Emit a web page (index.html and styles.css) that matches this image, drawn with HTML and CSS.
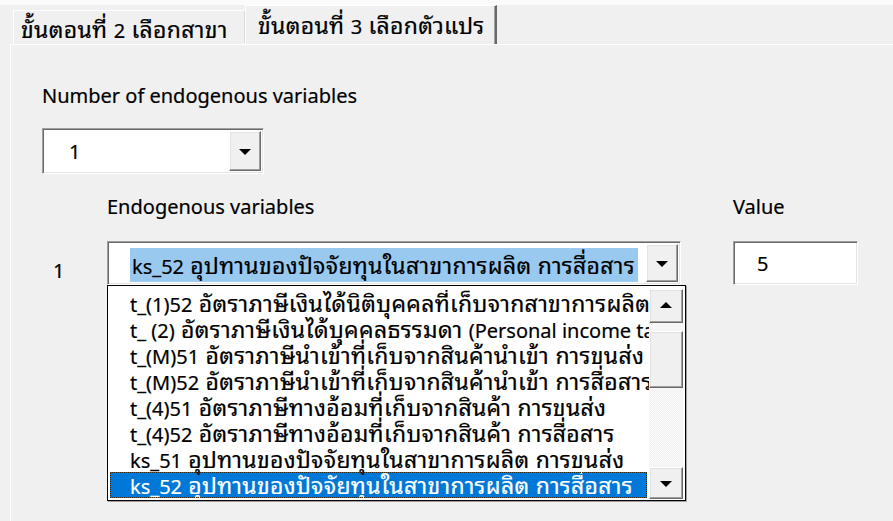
FILE: index.html
```html
<!DOCTYPE html>
<html lang="th">
<head>
<meta charset="utf-8">
<title>ขั้นตอนที่ 3 เลือกตัวแปร</title>
<link rel="stylesheet" href="styles.css">
</head>
<body>
<div class="window">
  <div class="tabs">
    <div class="tab th"><span>ขั้นตอนที่ <span class="code">2</span> เลือกสาขา</span></div>
    <div class="tab active th"><span>ขั้นตอนที่ <span class="code">3</span> เลือกตัวแปร</span></div>
  </div>
  <div class="panel">
    <div class="field-label">Number of endogenous variables</div>
    <div class="combo combo-small">
      <div class="combo-text">1</div>
      <div class="drop-btn"><span class="arrow"></span></div>
    </div>
    <div class="var-grid">
      <div></div>
      <div class="col-head">Endogenous variables</div>
      <div class="col-head">Value</div>
      <div class="row-num">1</div>
      <div class="combo combo-wide">
        <div class="combo-text th"><span class="sel"><span class="code">ks_52</span> อุปทานของปัจจัยทุนในสาขาการผลิต การสื่อสาร</span></div>
        <div class="drop-btn"><span class="arrow"></span></div>
        <div class="dropdown">
          <ul class="items th">
            <li><span class="code">t_(1)52</span> อัตราภาษีเงินได้นิติบุคคลที่เก็บจากสาขาการผลิต</li>
            <li><span class="code">t_ (2)</span> อัตราภาษีเงินได้บุคคลธรรมดา <span class="code">(Personal income tax)</span></li>
            <li><span class="code">t_(M)51</span> อัตราภาษีนำเข้าที่เก็บจากสินค้านำเข้า การขนส่ง</li>
            <li><span class="code">t_(M)52</span> อัตราภาษีนำเข้าที่เก็บจากสินค้านำเข้า การสื่อสาร</li>
            <li><span class="code">t_(4)51</span> อัตราภาษีทางอ้อมที่เก็บจากสินค้า การขนส่ง</li>
            <li><span class="code">t_(4)52</span> อัตราภาษีทางอ้อมที่เก็บจากสินค้า การสื่อสาร</li>
            <li><span class="code">ks_51</span> อุปทานของปัจจัยทุนในสาขาการผลิต การขนส่ง</li>
            <li class="current"><span class="code">ks_52</span> อุปทานของปัจจัยทุนในสาขาการผลิต การสื่อสาร</li>
          </ul>
          <div class="scrollbar">
            <div class="sb-btn"><span class="arrow up"></span></div>
            <div class="sb-track">
              <div class="sb-thumb"></div>
            </div>
            <div class="sb-btn"><span class="arrow"></span></div>
          </div>
        </div>
      </div>
      <div class="textbox">5</div>
    </div>
  </div>
</div>
</body>
</html>
```

FILE: styles.css
```css
* {
  box-sizing: border-box;
}

html, body {
  margin: 0;
  padding: 0;
}

body {
  width: 893px;
  height: 521px;
  overflow: hidden;
  background: #f0f0f0;
  font-family: "Noto Sans", "Noto Sans Thai Looped", "Noto Sans Thai", sans-serif;
  font-size: 20px;
  color: #000;
  -webkit-text-stroke: 0.2px currentColor;
}

/* Thai runs are set larger than the Latin ones */
.th {
  font-size: 23px;
  letter-spacing: 0.3px;
}

.th .code {
  font-size: 20px;
  letter-spacing: 0;
}

.window {
  height: 521px;
  display: flex;
  flex-direction: column;
}

/* tab strip */
.tabs {
  display: flex;
  align-items: flex-end;
  padding-left: 13px;
  border-top: 5px solid #fbfbfb;
  height: 44px;
  position: relative;
  z-index: 1;
}

.tab {
  width: 232px;
  height: 33px;
  padding: 0 0 0 7px;
  display: flex;
  align-items: center;
  white-space: nowrap;
  overflow: hidden;
  background: #f0f0f0;
  border: 1px solid #d9d9d9;
  border-bottom: none;
  border-top-color: #fff;
  border-left-color: #fff;
  margin-bottom: 1px;
}

.tab.active {
  width: 252px;
  height: 39px;
  margin-bottom: 0;
  padding: 0 0 4px 12px;
  border-top: 1px solid #fff;
  border-left: 1px solid #fff;
  border-right: 2px solid #696969;
  box-shadow: inset -1px 0 0 #a0a0a0;
}

/* page of the tab control */
.panel {
  flex: 1;
  margin-left: 10px;
  border-top: 1px solid #fff;
  border-left: 1px solid #fff;
  padding: 39px 0 0 31px;
}

.field-label,
.col-head {
  line-height: 24px;
}

/* sunken combo / edit boxes */
.combo,
.textbox {
  position: relative;
  background: #fff;
  border: 1px solid;
  border-color: #a0a0a0 #fff #fff #a0a0a0;
  box-shadow: inset 1px 1px 0 #696969, inset -1px -1px 0 #e3e3e3;
  display: flex;
  align-items: center;
}

.combo-small {
  margin-top: 20px;
  width: 222px;
  height: 46px;
}

.combo-text {
  flex: 1;
  padding-left: 26px;
  white-space: nowrap;
  overflow: hidden;
}

.combo-wide .combo-text {
  padding-left: 22px;
}

.sel {
  background: #99c9ef;
  padding: 1px 3px 2px 2px;
}

.drop-btn {
  width: 32px;
  align-self: stretch;
  margin: 2px 2px 2px 0;
  background: #f0f0f0;
  border: 1px solid;
  border-color: #fff #696969 #696969 #fff;
  box-shadow: inset -1px -1px 0 #a0a0a0, inset 1px 1px 0 #e3e3e3;
  display: flex;
  align-items: center;
  justify-content: center;
}

.arrow {
  width: 0;
  height: 0;
  border-left: 6px solid transparent;
  border-right: 6px solid transparent;
  border-top: 6px solid #000;
  margin-top: 2px;
}

.arrow.up {
  border-top: none;
  border-bottom: 6px solid #000;
  margin-top: -2px;
}

/* row of endogenous variables */
.var-grid {
  margin-top: 21px;
  display: grid;
  grid-template-columns: 65px 626px 125px;
  row-gap: 22px;
  align-items: center;
}

.row-num {
  padding-left: 11px;
  padding-top: 14px;
}

.combo-wide {
  width: 574px;
  height: 44px;
}

.textbox {
  height: 44px;
  padding-left: 23px;
}

/* open list of the wide combo */
.dropdown {
  position: absolute;
  left: -1px;
  top: 43px;
  width: 579px;
  height: 216px;
  background: #fff;
  border: 1px solid #000;
  box-shadow: 1px 1px 0 #a0a0a0;
  display: flex;
  padding: 4px 2px 1px 2px;
  z-index: 2;
}

.items {
  list-style: none;
  margin: 0;
  padding: 0;
  flex: 1;
  overflow: hidden;
}

.items li {
  height: 26px;
  line-height: 26px;
  padding-left: 20px;
  white-space: nowrap;
}

.items li.current {
  background: #0078d7;
  color: #fff;
  outline: 1px dotted #3b2a12;
  outline-offset: -1px;
  margin-right: 2px;
}

.scrollbar {
  width: 34px;
  margin-top: -1px;
  display: flex;
  flex-direction: column;
  background: #f0f0f0;
}

.sb-btn,
.sb-thumb {
  background: #f0f0f0;
  border: 1px solid;
  border-color: #fff #696969 #696969 #fff;
  box-shadow: inset -1px -1px 0 #a0a0a0, inset 1px 1px 0 #e3e3e3;
}

.sb-btn {
  height: 34px;
  display: flex;
  align-items: center;
  justify-content: center;
}

.sb-btn:last-child {
  height: 32px;
}

.sb-track {
  flex: 1;
  background-color: #f7f7f7;
  background-image: repeating-conic-gradient(#f0f0f0 0 25%, #fbfbfb 0 50%);
  background-size: 2px 2px;
  padding-top: 8px;
}

.sb-thumb {
  height: 57px;
}
```
